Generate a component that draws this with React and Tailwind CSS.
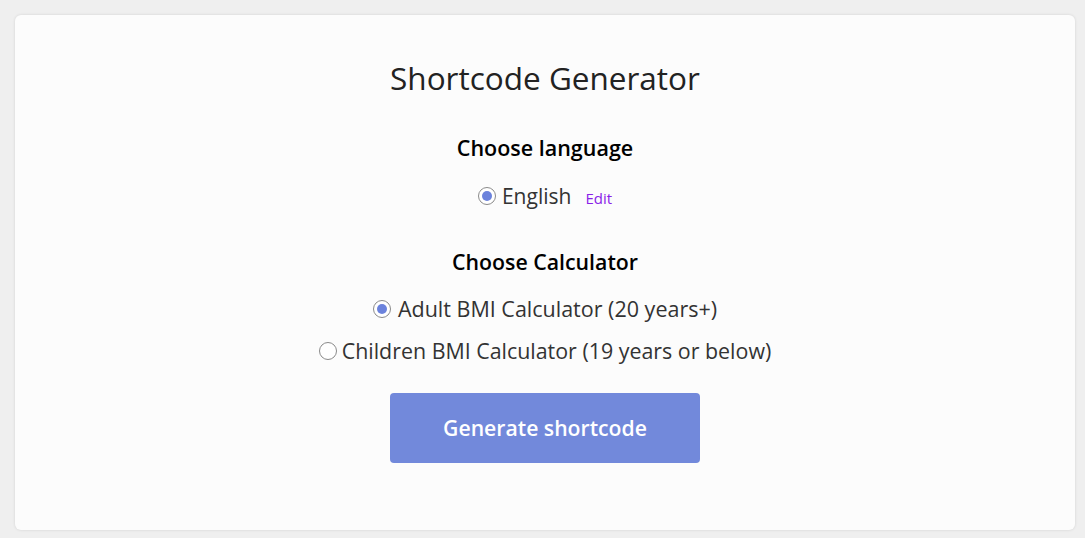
export default function App() {
  const font = { fontFamily: '"Open Sans", "Noto Sans", sans-serif' };
  const Radio = ({ checked }) => (
    <span className="inline-flex h-[18px] w-[18px] shrink-0 items-center justify-center rounded-full border border-[#8a8a8a] bg-white">
      {checked && <span className="h-[10px] w-[10px] rounded-full bg-[#6b82dc]" />}
    </span>
  );
  return (
    <div className="h-screen overflow-hidden bg-[#efefef] pl-[15px] pr-[10px] pt-[15px]" style={font}>
      <div className="flex h-[515px] flex-col items-center rounded-[6px] bg-[#fcfcfc] shadow-[0_0_3px_rgba(0,0,0,0.12)]">
        <h1 className="mt-[43px] text-[31.5px] leading-[40px] font-medium text-[#222]">Shortcode Generator</h1>
        <h2 className="mt-[36px] text-[21.5px] leading-[28px] font-semibold text-black">Choose language</h2>
        <div className="mt-[18px] flex items-center gap-[6px] text-[21px] leading-[28px] text-[#333]">
          <Radio checked />
          <span>English</span>
          <span className="ml-[8px] mt-[4px] text-[15px] text-[#8a1ee8]">Edit</span>
        </div>
        <h2 className="mt-[36px] text-[21.3px] leading-[28px] font-semibold text-black">Choose Calculator</h2>
        <div className="mt-[19px] flex items-center gap-[7px] text-[21.5px] leading-[28px] text-[#333]">
          <Radio checked />
          <span>Adult BMI Calculator (20 years+)</span>
        </div>
        <div className="mt-[14px] flex items-center gap-[5px] text-[21.4px] leading-[28px] text-[#333]">
          <Radio />
          <span>Children BMI Calculator (19 years or below)</span>
        </div>
        <button className="mt-[28px] h-[70px] w-[310px] rounded-[4px] bg-[#7289db] text-[21.2px] font-semibold text-white">
          Generate shortcode
        </button>
      </div>
    </div>
  );
}
